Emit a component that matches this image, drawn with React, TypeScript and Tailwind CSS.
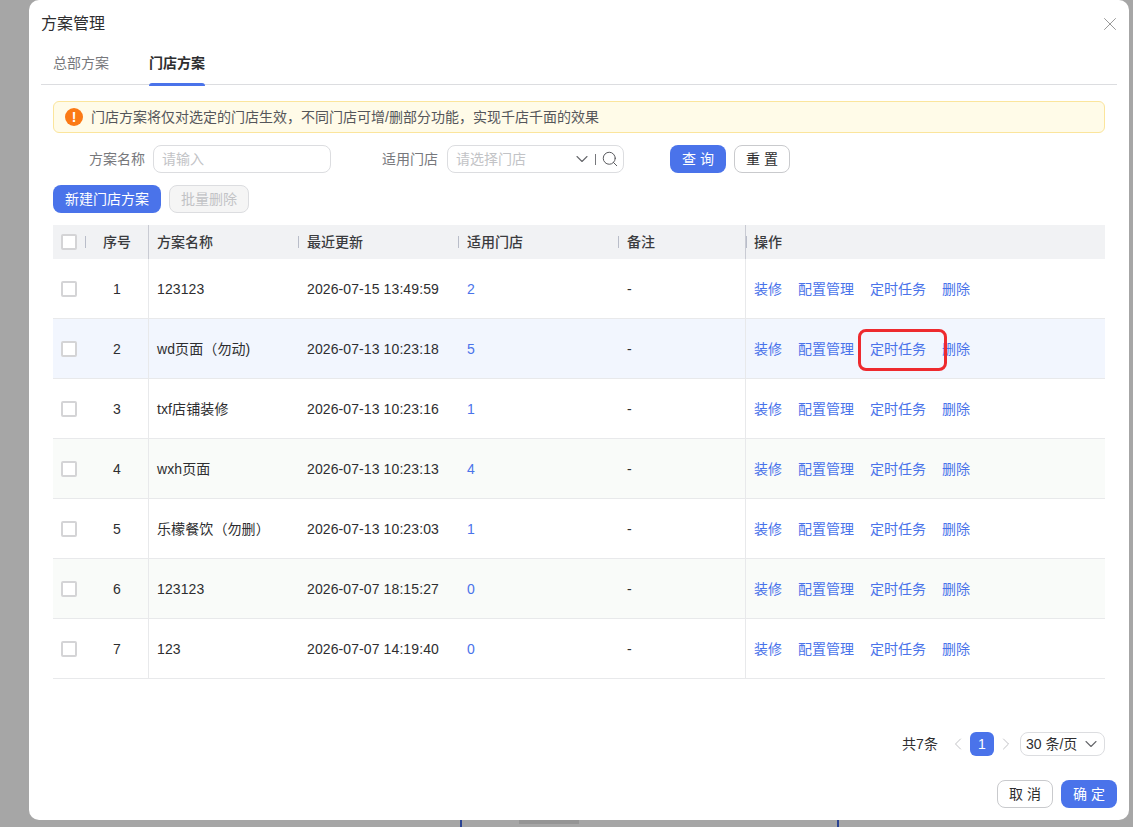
import { ChevronDown, ChevronLeft, ChevronRight, Search, X } from "lucide-react";

const rows = [
  { id: 1, name: "123123", time: "2026-07-15 13:49:59", stores: 2 },
  { id: 2, name: "wd页面（勿动)", time: "2026-07-13 10:23:18", stores: 5 },
  { id: 3, name: "txf店铺装修", time: "2026-07-13 10:23:16", stores: 1 },
  { id: 4, name: "wxh页面", time: "2026-07-13 10:23:13", stores: 4 },
  { id: 5, name: "乐檬餐饮（勿删）", time: "2026-07-13 10:23:03", stores: 1 },
  { id: 6, name: "123123", time: "2026-07-07 18:15:27", stores: 0 },
  { id: 7, name: "123", time: "2026-07-07 14:19:40", stores: 0 },
];

const gridCols = "grid grid-cols-[33px_63px_149px_160px_160px_127px_1fr]";

function Checkbox() {
  return <span className="block h-4 w-4 rounded-[2px] border-2 border-[#d4d4d6] bg-white" />;
}

function HeaderCell({ label }: { label: string }) {
  return (
    <div className="flex items-center">
      <span className="mr-2 h-[12px] w-px bg-[#b9bdc9]" />
      <span>{label}</span>
    </div>
  );
}

export default function App() {
  return (
    <div className="relative h-[827px] w-[1133px] overflow-hidden bg-[#a6a6a6] font-['Liberation_Sans','Noto_Sans_CJK_SC',sans-serif] text-[14px] text-[#2e2e30]">
      <div className="ml-[29px] flex h-[820px] w-[1100px] flex-col rounded-[10px] bg-white">
        <div className="flex h-[47px] items-center justify-between pl-[12px] pr-[8px] pt-[1px]">
          <h1 className="text-[16px] leading-6 text-[#2e2e30]">方案管理</h1>
          <X size={22} strokeWidth={1} className="text-[#8f8f8f]" />
        </div>

        <div className="mx-[12px] flex h-[38px] items-start border-b border-[#dcdde0] pt-[5px]">
          <div className="ml-[12px] w-[96px] leading-[22px] text-[#77787c]">总部方案</div>
          <div className="relative h-[33px] font-bold leading-[22px] text-[#2e2e30]">
            门店方案
            <span className="absolute bottom-[-1px] left-0 h-[3px] w-full rounded-t-[3px] bg-[#4a73ea]" />
          </div>
        </div>

        <div className="flex flex-1 flex-col px-[24px] pt-[16px]">
          <div className="flex h-[32px] items-center rounded-[6px] border border-[#fbe59c] bg-[#fffbe8] pl-[11px] text-[#55565a]">
            <span className="mr-[8px] flex h-[18px] w-[18px] items-center justify-center rounded-full bg-[#fb7a16] text-[14px] font-bold leading-none text-white">!</span>
            门店方案将仅对选定的门店生效，不同门店可增/删部分功能，实现千店千面的效果
          </div>

          <div className="mt-[12px] flex h-[28px] items-center">
            <span className="ml-[36px] text-[#77787c]">方案名称</span>
            <div className="ml-[8px] flex h-[28px] w-[178px] items-center rounded-[8px] border border-[#dcdde0] pl-[8px] text-[#c2c3c6]">请输入</div>
            <span className="ml-[51px] text-[#77787c]">适用门店</span>
            <div className="ml-[9px] flex h-[28px] w-[177px] items-center rounded-[8px] border border-[#dcdde0] pl-[8px] text-[#c2c3c6]">
              <span className="flex-1">请选择门店</span>
              <ChevronDown size={20} strokeWidth={1.3} className="text-[#66676b]" />
              <span className="ml-[3px] h-[11px] w-px bg-[#77787c]" />
              <Search size={18} strokeWidth={1.3} className="ml-[5px] mr-[4px] text-[#55565a]" />
            </div>
            <button className="ml-[46px] h-[28px] w-[56px] rounded-[8px] bg-[#4a73ea] pl-[4px] tracking-[4px] text-white">查询</button>
            <button className="ml-[8px] h-[28px] w-[56px] rounded-[8px] border border-[#c9cacd] bg-white pl-[4px] tracking-[4px] text-[#2e2e30]">重置</button>
          </div>

          <div className="mt-[12px] flex h-[28px] gap-[8px]">
            <button className="h-[28px] w-[108px] rounded-[8px] bg-[#4a73ea] text-white">新建门店方案</button>
            <button className="h-[28px] w-[80px] rounded-[8px] border border-[#dcdde0] bg-[#f5f5f5] text-[#c2c3c6]">批量删除</button>
          </div>

          <div className="mt-[12px] w-[1052px]">
            <div className={`${gridCols} h-[34px] items-center bg-[#f1f2f4] font-medium text-[#3a3b3e]`}>
              <div className="flex items-center pl-[8px]">
                <Checkbox />
                <span className="ml-[8px] h-[12px] w-px bg-[#b9bdc9]" />
              </div>
              <div className="flex h-full items-center justify-center border-r border-[#c9cbd3]">序号</div>
              <div className="pl-[8px]">方案名称</div>
              <HeaderCell label="最近更新" />
              <HeaderCell label="适用门店" />
              <HeaderCell label="备注" />
              <div className="flex h-full items-center border-l border-[#c9cbd3]">
                <span className="mr-[7px] h-[12px] w-px bg-[#b9bdc9]" />
                <span>操作</span>
              </div>
            </div>

            {rows.map((row) => (
              <div
                key={row.id}
                className={`${gridCols} h-[60px] items-center border-b border-[#e8e9eb] ${
                  row.id === 2 ? "bg-[#f2f6fe]" : row.id === 4 || row.id === 6 ? "bg-[#f9fbf9]" : "bg-white"
                }`}
              >
                <div className="pl-[8px]">
                  <Checkbox />
                </div>
                <div className="flex h-full items-center justify-center border-r border-[#e8e9eb] pt-[2px]">{row.id}</div>
                <div className="pl-[8px] pt-[2px] tracking-[0.1px]">{row.name}</div>
                <div className="pl-[9px] pt-[2px] tracking-[0.1px]">{row.time}</div>
                <div className="pl-[9px] pt-[2px] text-[#4a73ea]">{row.stores}</div>
                <div className="pl-[9px] pt-[2px]">-</div>
                <div className="flex h-full items-center gap-[16px] border-l border-[#e8e9eb] pl-[8px] pt-[2px] text-[#4a73ea]">
                  <span>装修</span>
                  <span>配置管理</span>
                  <span className="relative">
                    定时任务
                    {row.id === 2 && (
                      <span className="absolute left-[-12px] top-[-10px] h-[42px] w-[89px] rounded-[8px] border-[3px] border-[#ee2a2e]" />
                    )}
                  </span>
                  <span>删除</span>
                </div>
              </div>
            ))}
          </div>

          <div className="mt-[53px] flex h-[24px] items-center justify-end">
            <span className="mr-[10px] tracking-[0.1px] text-[#2e2e30]">共7条</span>
            <ChevronLeft size={20} strokeWidth={1} className="text-[#b5b6b9]" />
            <span className="mx-[2px] flex h-[24px] w-[24px] items-center justify-center rounded-[6px] bg-[#4a73ea] text-white">1</span>
            <ChevronRight size={20} strokeWidth={1} className="text-[#b5b6b9]" />
            <div className="ml-[4px] flex h-[24px] w-[85px] items-center justify-between rounded-[8px] border border-[#dcdde0] pl-[5px] pr-[3px]">
              <span>30 条/页</span>
              <ChevronDown size={20} strokeWidth={1.3} className="text-[#66676b]" />
            </div>
          </div>

          <div className="-mr-[12px] mt-[24px] flex justify-end gap-[8px]">
            <button className="h-[28px] w-[56px] rounded-[8px] border border-[#c9cacd] bg-white pl-[4px] tracking-[4px]">取消</button>
            <button className="h-[28px] w-[56px] rounded-[8px] bg-[#4a73ea] pl-[4px] tracking-[4px] text-white">确定</button>
          </div>
        </div>
      </div>

      <span className="absolute bottom-0 left-[460px] h-[7px] w-[2px] bg-[#2b4392]" />
      <span className="absolute bottom-0 left-[837px] h-[7px] w-[2px] bg-[#2b4392]" />
      <span className="absolute bottom-[3px] left-[519px] h-[4px] w-[60px] bg-[#959595]" />
    </div>
  );
}
